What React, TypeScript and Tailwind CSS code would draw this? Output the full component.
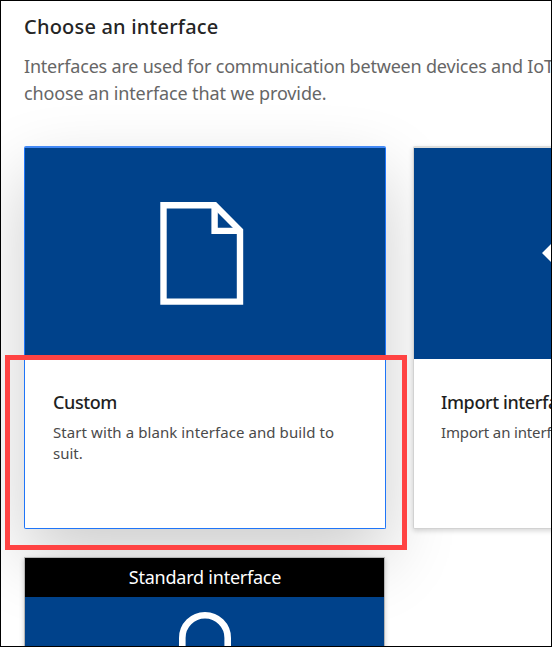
import type { ReactNode } from "react";

function DocumentIcon() {
  return (
    <svg className="mr-[6px]" width="84" height="104" viewBox="0 0 84 104" fill="none" stroke="#fff" strokeWidth="6.4">
      <path d="M3.5 3.3H54.8L80 28.5V99.6H3.5Z" />
      <path d="M54.6 3.3V28.9H80" />
    </svg>
  );
}

function PersonIcon() {
  return (
    <svg width="52" height="80" viewBox="0 0 52 80" fill="none" stroke="#fff" strokeWidth="6.6">
      <path d="M3.3 80V26a22.7 22.7 0 0 1 45.4 0V80" />
    </svg>
  );
}

type CardProps = {
  title: string;
  titleClass: string;
  children: ReactNode;
  icon: ReactNode;
  selected?: boolean;
};

function InterfaceCard({ title, titleClass, children, icon, selected }: CardProps) {
  return (
    <article
      className={
        selected
          ? "flex h-[383px] w-[362px] shrink-0 flex-col rounded-[2px] border border-t-2 border-[#1f75f8] border-t-[#4389f5] bg-white shadow-[0_29px_72px_rgba(0,0,0,0.2)]"
          : "relative flex h-[383px] w-[362px] shrink-0 flex-col rounded-[2px] border border-t-2 border-[#d2d2d2] border-t-[#dddddb] bg-white shadow-[0_2px_5px_rgba(0,0,0,0.16)]"
      }
    >
      <div className="flex h-[211px] shrink-0 items-center justify-center bg-[#00428b]">{icon}</div>
      <div className="pt-[30px] pl-[28px]">
        <h2 className={`text-[18px] leading-[27px] font-medium text-[#1f1f1f] ${titleClass}`}>{title}</h2>
        <div className="mt-[6px] text-[15px] leading-[21px] text-[#4a4a4a]">{children}</div>
      </div>
    </article>
  );
}

export default function App() {
  return (
    <main className="relative h-[647px] w-[552px] overflow-hidden border border-black bg-white font-['Noto_Sans',sans-serif] whitespace-nowrap">
      <header className="pt-[11px] pl-[23px]">
        <h1 className="text-[20px] leading-[30px] font-medium tracking-[0.2px] text-[#252525]">Choose an interface</h1>
        <p className="mt-[11px] text-[18px] leading-[27px] text-[#666]">
          <span className="block tracking-[-0.2px]">Interfaces are used for communication between devices and IoT</span>
          <span className="block tracking-[-0.12px]">choose an interface that we provide.</span>
        </p>
      </header>
      <section className="mt-[39px] ml-[23px] flex gap-[27px]">
        <InterfaceCard title="Custom" titleClass="tracking-[-0.4px]" icon={<DocumentIcon />} selected>
          <p className="tracking-[0.08px]">Start with a blank interface and build to</p>
          <p>suit.</p>
        </InterfaceCard>
        <InterfaceCard
          title="Import interface"
          titleClass="tracking-[-0.4px] -ml-px"
          icon={
            <svg width="104" height="60" viewBox="0 0 104 60" fill="#fff">
              <path d="M0 29 24 5 29 10 10 29 29 48 24 53Z" />
            </svg>
          }
        >
          <p className="-ml-px tracking-[-0.15px]">Import an interface</p>
        </InterfaceCard>
      </section>
      <section className="relative mt-[28px] ml-[23px] h-[300px] w-[361px] border border-[#b5b5b5] bg-[#00428b] shadow-[0_2px_5px_rgba(0,0,0,0.2)]">
        <div className="flex h-[39px] items-center justify-center bg-black pl-px text-[18px] tracking-[-0.23px] text-white">
          <span>Standard interface</span>
        </div>
        <div className="flex justify-center pt-[15px]">
          <PersonIcon />
        </div>
      </section>
      <div className="absolute top-[354px] left-[4px] h-[195px] w-[402px] border-[5px] border-[#ff4343]" />
    </main>
  );
}
